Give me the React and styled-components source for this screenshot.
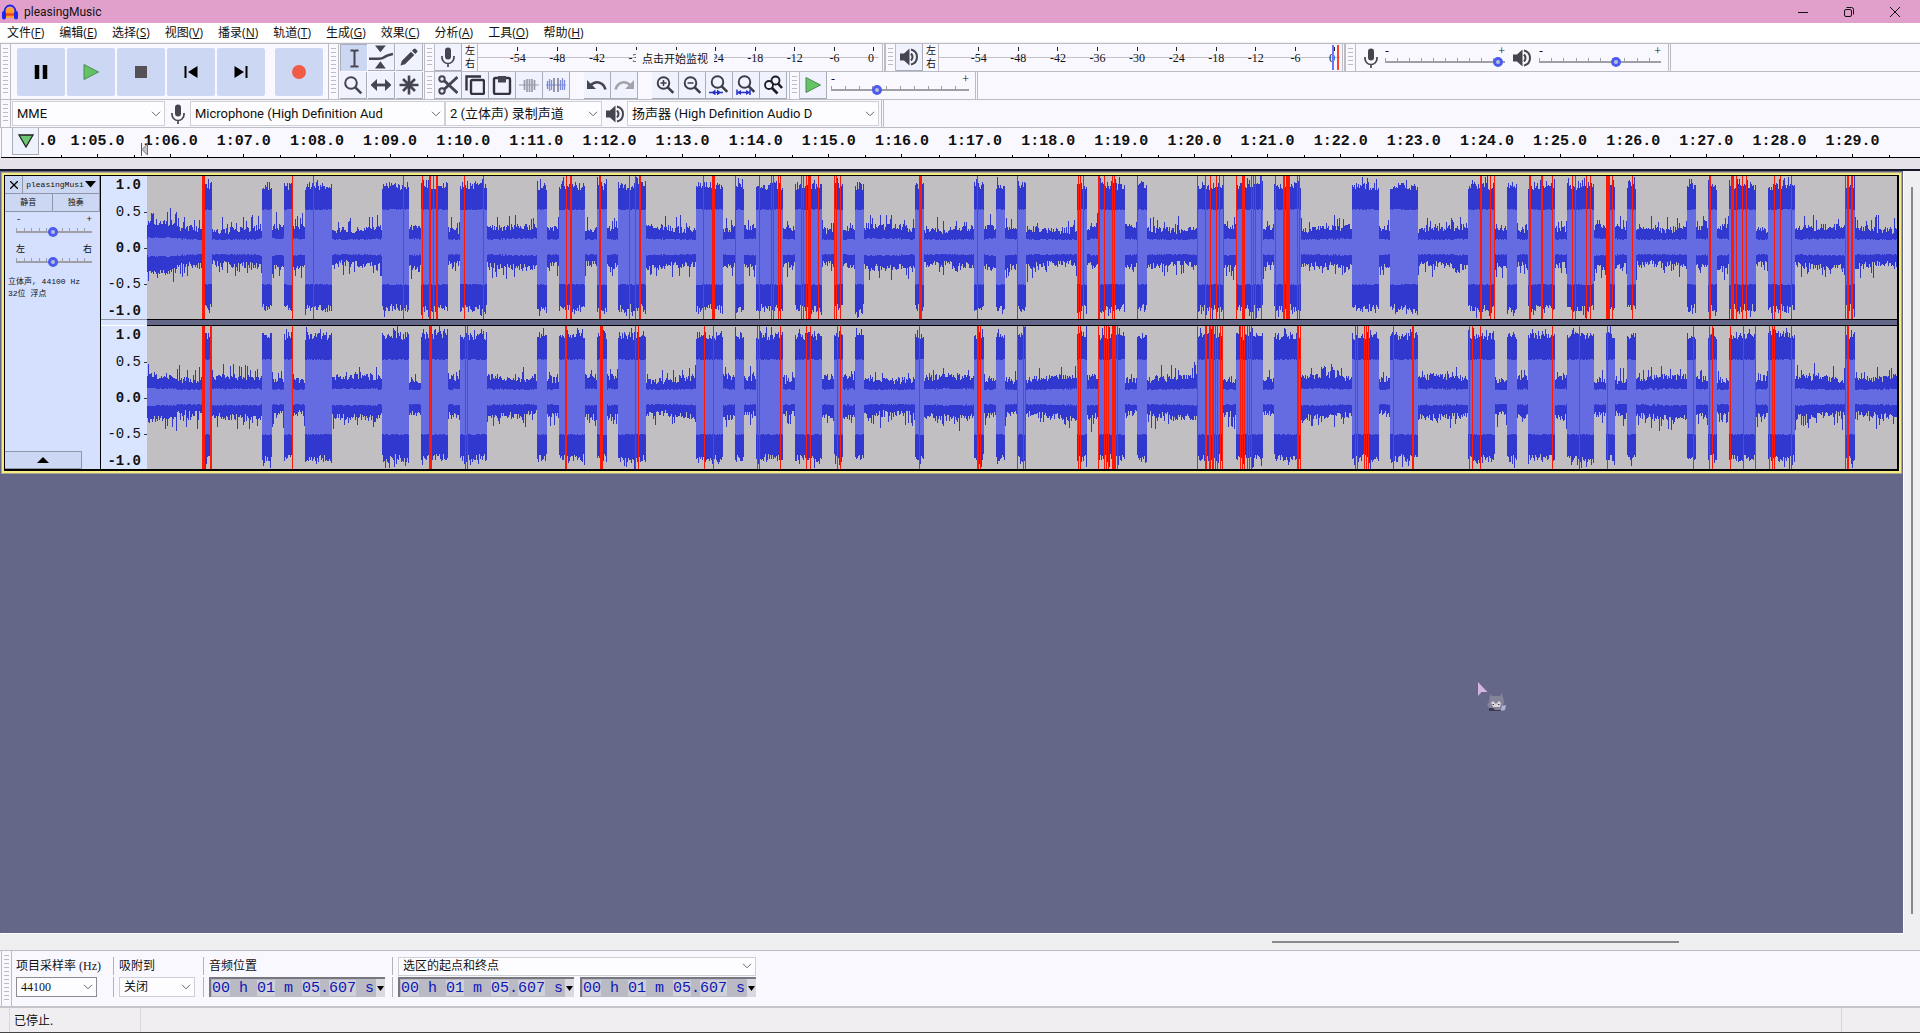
import React from "react";
import styled, { createGlobalStyle, css } from "styled-components";

const ui = '"Open Sans", "Noto Sans CJK SC", sans-serif';
const field = 'Roboto, "Noto Sans CJK SC", sans-serif';
const song = '"Liberation Serif", "Noto Sans CJK SC", serif';
const mono = '"Liberation Mono", "Noto Sans CJK SC", monospace';
const line = "#bdbbc3";
const ink = "#45454f";

const Global = createGlobalStyle`
  *, *::before, *::after { box-sizing: border-box; }
  body { margin: 0; font-family: ${ui}; font-size: 12px; color: #111; }
  button, select, input { font: inherit; color: inherit; margin: 0; padding: 0; border: 0; border-radius: 0; }
  svg { display: block; }
`;

/* ---------- frame ---------- */
const Window = styled.div`
  display: flex;
  flex-direction: column;
  height: 100vh;
  overflow: hidden;
  background: #f9f8ff;
  border-bottom: 1px solid #444;
`;
const TitleBar = styled.header`
  display: flex;
  align-items: center;
  flex: none;
  height: 23px;
  padding: 0 2px;
  background: #e0a0cb;
`;
const Title = styled.h1`
  flex: 1;
  margin: 0;
  padding-left: 6px;
  font: 400 12px/20px ${field};
`;
const CaptionButton = styled.button`
  display: grid;
  place-items: center;
  width: 46px;
  height: 22px;
  background: none;
`;
const MenuBar = styled.nav`
  display: flex;
  flex: none;
  height: 20px;
  padding-left: 7px;
  gap: 15px;
  background: #fff;
  border-bottom: 1px solid #efeff2;
`;
const MenuItem = styled.button`
  background: none;
  line-height: 18px;
  white-space: nowrap;
`;

/* ---------- tool dock ---------- */
const Dock = styled.div`
  flex: none;
  border-top: 1px solid ${line};
`;
const DockTop = styled.div`
  display: flex;
  border-bottom: 1px solid ${line};
`;
const DockRows = styled.div`
  flex: 1;
  display: grid;
  grid-template-rows: 27px 27px;
  row-gap: 1px;
  background: ${line};
`;
const Row = styled.div`
  display: flex;
  background: #f9f8ff;
  height: 27px;
`;
const DeviceRow = styled(Row)`
  height: 28px;
  border-bottom: 1px solid ${line};
`;
const Grip = styled.div`
  flex: none;
  width: 11px;
  margin-right: ${(p) => p.$after || 0}px;
  border: solid ${line};
  border-width: 0 1px;
  background: repeating-linear-gradient(#bdbbc3 0 1px, transparent 1px 4px) 50% 4px / 5px calc(100% - 8px) no-repeat;
`;
const BarEnd = styled.div`
  width: 3px;
  margin-left: ${(p) => p.$before || 0}px;
  border: solid ${line};
  border-width: 0 1px;
`;
const Transport = styled.div`
  display: flex;
  align-items: center;
  gap: 2px;
  padding: 0 5px 0 6px;
`;
const TransportButton = styled.button`
  display: grid;
  place-items: center;
  width: 48px;
  height: 48px;
  margin-left: ${(p) => (p.$apart ? 8 : 0)}px;
  border-radius: 2px;
  background: #ccd8f3;
`;
const ToolGrid = styled.div`
  display: grid;
  grid-template-columns: repeat(3, 27px);
  grid-auto-rows: 27px;
  gap: 1px;
  width: 84px;
`;
const ToolButton = styled.button`
  display: grid;
  place-items: center;
  flex: none;
  width: 27px;
  height: 27px;
  background: #f0f2fd;
  border: solid #a9adba;
  border-width: 0 1px 1px 0;
  ${(p) =>
    p.$down &&
    css`
      background: #ccd8f3;
      border-width: 1px 0 0 1px;
    `}
`;
const Gap = styled.div`
  width: ${(p) => p.$w}px;
`;

/* ---------- meters ---------- */
const LeftRight = styled.div`
  display: grid;
  grid-template-rows: 13px 13px;
  width: 15px;
  padding-left: 3px;
  font: 10px/13px ${song};
`;
const Meter = styled.div`
  position: relative;
  display: flex;
  width: 402px;
  padding: 0 5px 0 20px;
  border-left: 1px solid ${line};
  background: linear-gradient(#c4c2c8, #c4c2c8) 0 13px / 100% 1px no-repeat;
`;
const MeterMark = styled.span`
  flex: 2 1 0;
  text-align: center;
  font: 12px/14px ${song};
  &::before {
    content: "";
    display: block;
    width: 1px;
    height: 4px;
    margin: 3px auto 0;
    background: #222;
  }
  &:last-of-type {
    flex-grow: 1;
    text-align: right;
  }
  &:last-of-type::before {
    margin-right: 0;
  }
`;
const MeterHint = styled.button`
  position: absolute;
  left: 158px;
  top: 6px;
  padding: 0 6px;
  background: #f9f8ff;
  font: 11px/17px ${ui};
  white-space: nowrap;
`;
const ClipBars = styled.div`
  position: absolute;
  right: 0;
  top: 1px;
  width: 8px;
  height: 25px;
  background: linear-gradient(90deg, #6a72ff 0 2px, transparent 2px 5px, #ff4030 5px 7px, transparent 7px);
`;

/* ---------- sliders ---------- */
const SliderBox = styled.label`
  display: grid;
  grid-template-columns: 1fr 1fr;
  align-content: start;
  width: ${(p) => p.$w}px;
  padding-top: 2px;
  font: 12px/10px ${song};
  & > :nth-child(2) {
    text-align: right;
  }
`;
const Range = styled.input`
  grid-column: 1 / 3;
  appearance: none;
  width: 100%;
  height: 12px;
  background:
    linear-gradient(#a09ea6, #a09ea6) 0 5px / 100% 2px no-repeat,
    repeating-linear-gradient(90deg, #a09ea6 0 1px, transparent 1px 10%) 0 2px / 100% 3px no-repeat;
  &::-webkit-slider-thumb {
    appearance: none;
    width: 10px;
    height: 10px;
    border: 3px solid #4c5cf0;
    border-radius: 50%;
    background: #b9bfd8;
  }
`;

/* ---------- drop-downs ---------- */
const Pick = styled.div`
  display: grid;
  grid-template-columns: 1fr 17px;
  align-items: center;
  width: ${(p) => p.$w}px;
  height: ${(p) => p.$h || 25}px;
  border: 1px solid ${(p) => p.$edge || "#cfcfd6"};
  background: #fdfdff;
  & > select {
    grid-area: 1 / 1 / 2 / 3;
    appearance: none;
    height: 100%;
    padding-left: 4px;
    background: none;
    font: ${(p) => p.$font || `13px/20px ${field}`};
    outline: 0;
  }
  & > svg {
    grid-area: 1 / 2;
    justify-self: center;
    pointer-events: none;
  }
`;
const IconSlot = styled.span`
  display: grid;
  place-items: center;
  flex: none;
  width: ${(p) => p.$w}px;
`;
const DeviceBar = styled.div`
  display: flex;
  align-items: center;
  padding-left: 1px;
`;

/* ---------- time ruler ---------- */
const Timeline = styled.div`
  position: relative;
  display: flex;
  flex: none;
  height: 30px;
  border-bottom: 1px solid #000;
  margin-left: 1px;
`;
const PinWell = styled.div`
  width: 37px;
  padding-left: 10px;
  border-left: 1px solid ${line};
`;
const PinButton = styled(ToolButton)`
  border-left-width: 1px;
  background: #eef2fd;
`;
const FirstStamp = styled.div`
  width: 23px;
  font: bold 15px/27px ${mono};
`;
const Stamp = styled.div`
  flex: 73 1 0;
  display: flex;
  flex-direction: column;
  align-items: center;
  padding-top: 1px;
  font: bold 15px/25px ${mono};
  white-space: nowrap;
  background: linear-gradient(#000, #000) 0 100% / 1px 2px no-repeat;
  &::after {
    content: "";
    width: 1px;
    height: 3px;
    background: #000;
  }
`;
const TimelineTail = styled.div`
  flex: 31 1 0;
  background: linear-gradient(#000, #000) 0 100% / 1px 2px no-repeat;
`;
const PlayStart = styled.svg`
  position: absolute;
  left: 140px;
  top: 15px;
`;
const RulerFoot = styled.div`
  flex: none;
  height: 13px;
  background: #e5e3e9;
  border-bottom: 2px solid #17172a;
`;

/* ---------- tracks ---------- */
const Workspace = styled.main`
  flex: 1;
  display: grid;
  grid-template-columns: 1fr 17px;
  grid-template-rows: 1fr 17px;
  min-height: 0;
  background: #efeff2;
`;
const Canvas = styled.section`
  position: relative;
  min-width: 0;
  background: #646787;
  box-shadow: 1px 1px 0 #fff;
`;
const Track = styled.article`
  display: grid;
  grid-template-columns: 95px 47px 1fr;
  margin: 2px 2px 0;
  padding: 1px 2px 2px 1px;
  border: 2px solid #f7ea84;
  outline: 1px solid #a9a78a;
  background: #000;
`;
const Panel = styled.div`
  display: flex;
  flex-direction: column;
  background: #d4e0fe;
`;
const PanelRow = styled.div`
  display: grid;
  grid-template-columns: ${(p) => p.$cols};
`;
const PanelButton = styled.button`
  display: flex;
  align-items: center;
  justify-content: center;
  gap: 1px;
  height: 18px;
  overflow: hidden;
  background: #ccd8f3;
  border: solid #8f96aa;
  border-width: 0 1px 1px 0;
  white-space: nowrap;
  font: 8px/16px ${mono};
`;
const PanelSlider = styled(SliderBox)`
  width: auto;
  margin: ${(p) => p.$top}px 8px 0 11px;
  padding: 0;
  font: 9px/12px ${mono};
`;
const PanelInfo = styled.p`
  flex: 1;
  margin: 8px 0 0 3px;
  white-space: nowrap;
  font: 8px/12px ${mono};
`;
const Collapse = styled(PanelButton)`
  width: 77px;
  border-width: 1px 1px 1px 0;
`;
const VRuler = styled.div`
  display: grid;
  grid-template-rows: 143px 7px 143px;
  margin-left: 1px;
  background: #d9e4ff;
`;
const VScale = styled.div`
  display: grid;
  grid-template-rows: 17fr 38fr 34fr 38fr 16fr;
  align-items: center;
  font: 14px/16px ${mono};
`;
const VMark = styled.span`
  padding-right: 6px;
  text-align: right;
  font-weight: ${(p) => (p.$bold ? 700 : 400)};
  background: ${(p) => (p.$tick ? "linear-gradient(#333, #333) 100% 50% / 3px 1px no-repeat" : "none")};
`;
const VSplit = styled.div`
  border: solid;
  border-width: 1px 0;
  border-color: #8c90a0 transparent #fff;
`;
const Waves = styled.div`
  display: grid;
  grid-template-rows: 143px 5px 143px;
  row-gap: 1px;
  min-width: 0;
  background: #000;
`;
const WaveSplit = styled.div`
  background: #646787;
`;
const WaveSvg = styled.svg`
  width: 100%;
  height: 143px;
  background: #c1bfc2;
`;
const Pointer = styled.svg`
  position: absolute;
  left: 77.6%;
  top: 510px;
`;
const VScroll = styled.div`
  padding: 16px 8px 19px 8px;
`;
const HScroll = styled.div`
  display: grid;
  grid-template-columns: 1272fr 407fr 224fr;
  align-items: center;
`;
const Thumb = styled.div`
  grid-column: 2;
  width: ${(p) => (p.$vertical ? "2px" : "100%")};
  height: ${(p) => (p.$vertical ? "100%" : "2px")};
  background: #8b888c;
`;

/* ---------- selection bar ---------- */
const SelectionBar = styled.footer`
  display: flex;
  flex: none;
  height: 58px;
  padding-left: 1px;
  border-top: 1px solid ${line};
  border-bottom: 2px solid #c6c4cb;
`;
const Group = styled.div`
  display: grid;
  grid-template-rows: 18px 20px;
  row-gap: 2px;
  align-content: start;
  padding-top: 6px;
  width: ${(p) => p.$w}px;
`;
const GroupRow = styled.div`
  display: flex;
  align-items: center;
  gap: 6px;
  padding-left: ${(p) => (p.$first ? 4 : 5)}px;
  border-left: ${(p) => (p.$first ? 0 : 1)}px solid #b4b2ba;
  font: 12px/18px ${song};
  white-space: nowrap;
`;
const TimeBox = styled.div`
  display: flex;
  width: 176px;
  height: 20px;
  border: solid #77777f;
  border-width: 2px 0 0 2px;
  background: #b9bac4;
`;
const cell = (from, n) =>
  `linear-gradient(#cfd0d8, #cfd0d8) calc(${from}ch + 1px) 1px / ${n}ch 16px no-repeat`;
const TimeInput = styled.input`
  flex: 1;
  min-width: 0;
  padding: 1px 0 0 1px;
  font: 15px/17px ${mono};
  color: #1016b4;
  background: ${[cell(0, 2), cell(5, 2), cell(10, 2), cell(13, 3)].join(", ")};
  outline: 0;
`;
const TimeMenu = styled.button`
  display: grid;
  place-items: center;
  width: 9px;
  background: #d9d9df;
`;
const StatusBar = styled.div`
  display: flex;
  flex: none;
  height: 24px;
  padding-left: 9px;
  background: #f0eef1;
`;
const StatusCell = styled.div`
  width: ${(p) => (p.$w ? p.$w + "px" : "auto")};
  flex: ${(p) => (p.$grow ? 1 : "none")};
  padding-left: 4px;
  border-left: 1px solid #d9d7dc;
  font: 12px/25px ${ui};
`;

/* ---------- icons ---------- */
const I = ({ s = 20, children, ...r }) => (
  <svg width={s} height={s} viewBox="0 0 20 20" fill="none" stroke={ink} strokeWidth="2" aria-hidden="true" {...r}>
    {children}
  </svg>
);
const Mic = () => (
  <I>
    <rect x="7" y="0.5" width="6" height="12" rx="3" fill={ink} stroke="none" />
    <path d="M4 9v1.5a6 6 0 0 0 12 0V9M10 16v4" strokeWidth="1.7" />
  </I>
);
const Speaker = () => (
  <I>
    <path d="M1 6.500h4l5.500-5v17l-5.500-5H1z" fill={ink} stroke="none" />
    <path d="M12 6.500q3 3.500 0 7M12 2.500c8 2 8 13 0 15" />
  </I>
);
const Chevron = () => (
  <svg width="10" height="6" viewBox="0 0 10 6" fill="none" stroke="#666" aria-hidden="true">
    <path d="M1 .8l4 4 4-4" />
  </svg>
);
const Lens = ({ children, y = 8 }) => (
  <I stroke="#3c3c46">
    <circle cx="8.500" cy={y} r="5.800" strokeWidth="1.900" />
    <path d={`M12.800 ${y + 4.3}l5.500 5.500`} strokeWidth="2.600" />
    {children}
  </I>
);
const Logo = () => (
  <svg width="16" height="16" viewBox="0 0 16 16" aria-hidden="true">
    <path d="M3 9a5 5.500 0 0 1 10 0v5H3z" fill="#ffa02c" />
    <path d="M3.500 10.500h9" stroke="#f0441c" strokeWidth="2.500" fill="none" />
    <path d="M2.500 10V7.500a5.500 6 0 0 1 11 0V10" fill="none" stroke="#1d24d8" strokeWidth="1.800" />
    <rect x="0" y="7" width="4" height="8.500" rx="2" fill="#1c28f0" />
    <rect x="12" y="7" width="4" height="8.500" rx="2" fill="#1c28f0" />
  </svg>
);

const transport = [
  ["暂停", <I key="i"><path d="M6 3v14M14 3v14" stroke="#000" strokeWidth="4.500" /></I>],
  ["播放", <I key="i"><path d="M3 2.500L17.500 10 3 17.500z" fill="#62c462" stroke="#55855a" strokeWidth="1" /></I>],
  ["停止", <I key="i"><path d="M4 4h12v12H4z" fill="#555157" stroke="none" /></I>],
  ["跳至开头", <I key="i"><path d="M4.500 4v12" stroke="#000" /><path d="M16.500 4v12L7 10z" fill="#000" stroke="none" /></I>],
  ["跳至结尾", <I key="i"><path d="M15.500 4v12" stroke="#000" /><path d="M3.500 4v12L13 10z" fill="#000" stroke="none" /></I>],
  ["录制", <I key="i"><circle cx="10" cy="10" r="7" fill="#f05a46" stroke="none" /></I>],
];
const tools = [
  ["选择工具", <I key="i"><path d="M6.500 2.500h3l1 1 1-1h3M6.500 18.500h3l1-1 1 1h3M10.500 3v15" strokeWidth="2" /></I>],
  ["包络工具", <I key="i" s={24}><path d="M0 11.500h8q3 0 5-1.500t7-2.500" strokeWidth="2.200" /><path d="M5 0.500h9l-4.500 5.500zM5 19.500h9L9.500 13.500z" fill={ink} stroke="none" /></I>],
  ["绘制工具", <I key="i"><path d="M1.500 18.500l1.200-4.500L12 4.700l3.300 3.300L6 17.300zM13 3.700l1.700-1.700q1-1 2 0l1.300 1.300q1 1 0 2L16.300 7z" fill={ink} stroke="none" /></I>],
  ["缩放工具", <I key="i"><circle cx="8" cy="8" r="5.800" /><path d="M12.300 12.300l6 6" strokeWidth="2.600" /></I>],
  ["时间移动工具", <I key="i"><path d="M3 10h14" strokeWidth="2.800" /><path d="M6 4v12L-.5 10zM14 4v12l6.500-6z" fill={ink} stroke="none" /></I>],
  ["多功能工具", <I key="i"><path d="M10 .5v19M.5 10h19M4 4l12 12M16 4L4 16" strokeWidth="2.600" /></I>],
];
const edit = [
  ["剪切", <I key="i"><circle cx="4" cy="4" r="2.700" /><circle cx="4" cy="16" r="2.700" /><path d="M6 5.500L19.500 18M6 14.500L19.500 2" strokeWidth="3" /></I>],
  ["复制", <I key="i" stroke="#34343e"><rect x="6" y="5" width="13" height="14" rx="1.500" strokeWidth="2.400" /><path d="M1.500 15.500V1.500H16" strokeWidth="2.400" /></I>],
  ["粘贴", <I key="i" stroke="#34343e"><rect x="2" y="3" width="16" height="16" rx="1.500" strokeWidth="2.400" /><path d="M6 1h8v6.500H6z" fill={ink} stroke="none" /></I>],
  ["修剪", <I key="i" stroke="#9a9aac"><path d="M0 10h20" strokeWidth="1" /><path d="M5.500 5v10M8 4v13M10.500 4v13M13 4v13M15.500 5v10" strokeWidth="1.700" /></I>],
  ["静音", <I key="i" stroke="#7c8cdc"><path d="M0 10h20" strokeWidth="1" /><path d="M1.500 6v8M3.500 4v12M5.500 5v10M14.500 5v10M16.500 3v12M18.500 5v10" strokeWidth="1.300" /><path d="M8 3v14M12 3v14" stroke="#77788c" strokeWidth="1.500" /></I>],
  null,
  ["撤销", <I key="i"><path d="M3.500 10.500C8 5.500 16 6 18.500 14.500" strokeWidth="2.600" /><path d="M0 5v9h9z" fill={ink} stroke="none" /></I>],
  ["重做", <I key="i" stroke="#a2a2a8"><path d="M16.500 10.500C12 5.500 4 6 1.500 14.500" strokeWidth="2.600" /><path d="M20 5v9h-9z" fill="#a2a2a8" stroke="none" /></I>],
  null,
  ["放大", <Lens key="i"><path d="M8.500 5v6M5.500 8h6" strokeWidth="1.500" /></Lens>],
  ["缩小", <Lens key="i"><path d="M5.500 8h6" strokeWidth="1.500" /></Lens>],
  ["适应选区", <Lens key="i" y={7}><path d="M0 17.500h14" stroke="#2630c8" strokeWidth="1.500" /><path d="M6.500 14.500v6l-4-3zM8 14.500v6l4-3z" fill="#2630c8" stroke="none" /></Lens>],
  ["适应项目", <Lens key="i" y={7}><path d="M1 14.500v6M14 14.500v6M1 17.500h13" stroke="#2630c8" strokeWidth="1.500" /><path d="M5 15v5l-4-2.500zM10 15v5l4-2.500z" fill="#2630c8" stroke="none" /></Lens>],
  ["缩放切换", <I key="i" stroke="#1c1c22" strokeWidth="1.800"><circle cx="12.500" cy="5.500" r="4" /><path d="M15 8.500l4 4.500" strokeWidth="2.600" /><circle cx="6" cy="10" r="4" /><path d="M9 13l5.500 5.500" strokeWidth="2.600" /></I>],
];

/* ---------- data ---------- */
const menus = [["文件", "F"], ["编辑", "E"], ["选择", "S"], ["视图", "V"], ["播录", "N"], ["轨道", "T"], ["生成", "G"], ["效果", "C"], ["分析", "A"], ["工具", "O"], ["帮助", "H"]];
const levels = [-54, -48, -42, -36, -30, -24, -18, -12, -6, 0];
const stamps = Array.from({ length: 25 }, (_, i) => `1:${String(5 + i).padStart(2, "0")}.0`);

/* loud passages, as [start, end] columns of the visible clip */
const bursts = [
  [58, 65], [115, 125], [137, 146], [158, 185], [235, 262], [274, 301], [313, 340], [390, 400], [412, 438],
  [450, 460], [471, 499], [549, 576], [588, 597], [609, 636], [648, 675], [687, 696], [708, 717], [768, 777],
  [827, 837], [849, 858], [870, 879], [930, 940], [951, 978], [990, 1000], [1050, 1076], [1089, 1116],
  [1127, 1154], [1205, 1232], [1243, 1271], [1321, 1348], [1360, 1370], [1381, 1408], [1420, 1447],
  [1459, 1468], [1480, 1489], [1540, 1549], [1561, 1570], [1582, 1609], [1621, 1648], [1698, 1708],
];

/* clipped samples, as [column, width] */
const clipsA = [
  [55, 3], [145], [166], [256], [275], [282, 2], [286], [289, 2], [317], [336], [419], [423, 2], [452, 2], [482],
  [488], [492, 2], [556], [565, 3], [588], [612], [624], [626], [631], [633], [654], [656], [659], [661, 3], [671],
  [687], [689], [693], [772, 3], [830], [870], [931], [933], [936], [951, 2], [957], [965], [967], [990], [1050],
  [1058], [1063], [1069], [1072], [1076], [1089], [1095, 3], [1104], [1106], [1108], [1114], [1128], [1136, 2],
  [1139, 4], [1150], [1152], [1333, 2], [1343], [1347], [1382, 2], [1394, 2], [1405], [1425], [1428], [1439],
  [1443], [1459, 4], [1465], [1485], [1562, 2], [1584, 3], [1589], [1595], [1599], [1627], [1633], [1644], [1698],
  [1700, 2], [1704, 2],
];
const clipsB = [
  [55, 3], [63, 2], [145], [282, 3], [318], [320], [418, 2], [453, 3], [488], [491], [557], [566], [610], [612],
  [633], [659], [663], [690], [693], [772], [830, 2], [833], [870], [876], [878], [931], [933], [951], [957], [959],
  [961], [965, 4], [970], [1050], [1058, 2], [1062, 2], [1065, 2], [1068], [1070], [1073], [1075], [1093], [1095],
  [1097], [1100], [1102], [1104], [1150, 2], [1153], [1208], [1210], [1217], [1219], [1221], [1246], [1265, 2],
  [1322], [1325], [1333], [1405], [1432], [1460], [1546], [1562], [1565], [1583], [1596], [1608], [1622], [1625],
  [1627], [1644], [1698], [1700, 2],
];

const WIDTH = 1750;
const MID = 71;

function waveform(seed) {
  let n = seed;
  const rnd = () => {
    n = (n * 1664525 + 1013904223) % 4294967296;
    return n / 4294967296;
  };
  const spike = (odds, size) => (rnd() < odds ? rnd() * size : 0);
  let peak = "";
  let rms = "";
  for (let x = 0; x < WIDTH; x++) {
    const loud = bursts.some(([a, b]) => x >= a && x < b);
    let up, down, core;
    if (loud) {
      up = 57 + rnd() * 8 + spike(0.25, 8);
      down = 57 + rnd() * 8 + spike(0.25, 8);
      core = 37 + rnd();
    } else {
      const swell = 2 * Math.sin(x / 19 + seed) + (x < 30 ? 4 : 0);
      up = 15 + swell + rnd() * 7 + spike(0.2, 13);
      down = 15 + swell + rnd() * 7 + spike(0.2, 13);
      core = 7 + rnd() * 1.5 + swell / 4;
    }
    up = Math.round(up);
    down = Math.round(down);
    core = Math.round(core);
    peak += `M${x} ${MID - up}h1v${up + down}h-1z`;
    rms += `M${x} ${MID - core}h1v${core * 2}h-1z`;
  }
  return { peak, rms };
}
const channels = [
  { ...waveform(7), clips: clipsA },
  { ...waveform(91), clips: clipsB },
];

/* ---------- parts ---------- */
const Wave = ({ peak, rms, clips, label }) => (
  <WaveSvg viewBox={`0 0 ${WIDTH} 143`} preserveAspectRatio="none" shapeRendering="crispEdges" role="img" aria-label={label}>
    <path d={peak} fill="#3038d0" />
    <path d={rms} fill="#656ce2" />
    <path d={clips.map(([x, w = 1]) => `M${x} 0h${w}v143h-${w}z`).join("")} fill="#ff1a08" />
  </WaveSvg>
);
const Slider = ({ as: Box = SliderBox, lo = "-", hi = "+", name, value, ...rest }) => (
  <Box {...rest}>
    <span>{lo}</span>
    <span>{hi}</span>
    <Range type="range" min="0" max="100" defaultValue={value} aria-label={name} />
  </Box>
);
const Dropdown = ({ name, value, id, ...rest }) => (
  <Pick {...rest}>
    <select aria-label={name} id={id} defaultValue={value}>
      <option>{value}</option>
    </select>
    <Chevron />
  </Pick>
);
const LevelMeter = ({ hint, clip }) => (
  <>
    <LeftRight>
      <span>左</span>
      <span>右</span>
    </LeftRight>
    <Meter>
      {levels.map((l) => (
        <MeterMark key={l}>{hint && l === -30 ? null : l}</MeterMark>
      ))}
      {hint && <MeterHint>{hint}</MeterHint>}
      {clip && <ClipBars />}
    </Meter>
  </>
);
const Scale = () => (
  <VScale>
    <VMark $bold>1.0</VMark>
    <VMark $tick>0.5</VMark>
    <VMark $bold $tick>0.0</VMark>
    <VMark $tick>-0.5</VMark>
    <VMark $bold>-1.0</VMark>
  </VScale>
);
const TimeField = ({ name, id }) => (
  <TimeBox>
    <TimeInput id={id} aria-label={name} defaultValue="00 h 01 m 05.607 s" />
    <TimeMenu aria-label={`${name}格式`}>
      <svg width="7" height="5" viewBox="0 0 7 5"><path d="M0 0h7L3.500 5z" /></svg>
    </TimeMenu>
  </TimeBox>
);

export default function App() {
  return (
    <Window>
      <Global />
      <TitleBar>
        <Logo />
        <Title>pleasingMusic</Title>
        <CaptionButton aria-label="最小化">
          <svg width="10" height="10" stroke="#111"><path d="M0 5.500h10" /></svg>
        </CaptionButton>
        <CaptionButton aria-label="还原">
          <svg width="10" height="10" fill="none" stroke="#111"><rect x=".5" y="2.500" width="7" height="7" rx="1.500" /><path d="M2.500 .5h5a2 2 0 0 1 2 2v5" /></svg>
        </CaptionButton>
        <CaptionButton aria-label="关闭">
          <svg width="10" height="10" stroke="#111"><path d="M0 0l10 10M10 0L0 10" /></svg>
        </CaptionButton>
      </TitleBar>
      <MenuBar>
        {menus.map(([t, k]) => (
          <MenuItem key={k}>
            {t}(<u>{k}</u>)
          </MenuItem>
        ))}
      </MenuBar>

      <Dock>
        <DockTop>
          <Grip />
          <Transport>
            {transport.map(([name, icon], i) => (
              <TransportButton key={name} aria-label={name} $apart={i === 5}>{icon}</TransportButton>
            ))}
          </Transport>
          <Grip $after={1} />
          <ToolGrid>
            {tools.map(([name, icon], i) => (
              <ToolButton key={name} aria-label={name} $down={i === 0}>{icon}</ToolButton>
            ))}
          </ToolGrid>
          <DockRows>
            <Row>
              <Grip />
              <ToolButton aria-label="录音电平"><Mic /></ToolButton>
              <LevelMeter hint="点击开始监视" />
              <BarEnd $before={3} />
              <Grip />
              <ToolButton aria-label="播放电平"><Speaker /></ToolButton>
              <LevelMeter clip />
              <BarEnd $before={2} />
              <Grip />
              <IconSlot $w={29}><Mic /></IconSlot>
              <Slider $w={120} name="录音音量" value={98} />
              <IconSlot $w={34}><Speaker /></IconSlot>
              <Slider $w={122} name="播放音量" value={64} />
              <BarEnd $before={7} />
            </Row>
            <Row>
              <Grip />
              {edit.map((e, i) =>
                e ? (
                  <ToolButton key={e[0]} aria-label={e[0]}>{e[1]}</ToolButton>
                ) : (
                  <Gap key={i} $w={14} />
                )
              )}
              <Gap $w={2} />
              <Grip />
              <ToolButton aria-label="以指定速度播放">
                <I><path d="M3 2.500L17.500 10 3 17.500z" fill="#62c462" stroke="#55855a" strokeWidth="1" /></I>
              </ToolButton>
              <Gap $w={4} />
              <Slider $w={138} name="播放速度" value={32} />
              <BarEnd $before={6} />
            </Row>
          </DockRows>
        </DockTop>
        <DeviceRow>
          <Grip />
          <DeviceBar>
            <Dropdown $w={153} name="音频主机" value="MME" />
            <IconSlot $w={25}><Mic /></IconSlot>
            <Dropdown $w={255} name="录音设备" value="Microphone (High Definition Aud" />
            <Dropdown $w={157} name="录音声道" value="2 (立体声) 录制声道" />
            <IconSlot $w={25}><Speaker /></IconSlot>
            <Dropdown $w={252} name="播放设备" value="扬声器 (High Definition Audio D" />
          </DeviceBar>
          <BarEnd $before={2} />
        </DeviceRow>
      </Dock>

      <Timeline>
        <PinWell>
          <PinButton aria-label="固定播放头">
            <svg width="16" height="14" viewBox="0 0 16 14"><path d="M1 1h14L8 13z" fill="#6cc870" stroke="#222" strokeWidth="1.300" /></svg>
          </PinButton>
        </PinWell>
        <FirstStamp>.0</FirstStamp>
        {stamps.map((s) => (
          <Stamp key={s}>{s}</Stamp>
        ))}
        <TimelineTail />
        <PlayStart width="7" height="13"><path d="M.5 0v13" stroke="#555" /><path d="M6.500 1v11L1 6.500z" fill="#c4c4c8" stroke="#777" /></PlayStart>
      </Timeline>
      <RulerFoot />

      <Workspace>
        <Canvas>
          <Track>
            <Panel>
              <PanelRow $cols="18px 1fr">
                <PanelButton aria-label="关闭轨道">
                  <svg width="8" height="8" stroke="#000" strokeWidth="1.300"><path d="M0 0l8 8M8 0L0 8" /></svg>
                </PanelButton>
                <PanelButton>
                  pleasingMusi
                  <svg width="11" height="7"><path d="M0 0h11L5.500 6.500z" /></svg>
                </PanelButton>
              </PanelRow>
              <PanelRow $cols="1fr 1fr">
                <PanelButton>静音</PanelButton>
                <PanelButton>独奏</PanelButton>
              </PanelRow>
              <Slider as={PanelSlider} $top={2} name="增益" value={48} />
              <Slider as={PanelSlider} $top={6} lo="左" hi="右" name="声像" value={48} />
              <PanelInfo>
                立体声, 44100 Hz
                <br />
                32位 浮点
              </PanelInfo>
              <Collapse aria-label="折叠">
                <svg width="12" height="6"><path d="M0 6h12L6 0z" /></svg>
              </Collapse>
            </Panel>
            <VRuler>
              <Scale />
              <VSplit />
              <Scale />
            </VRuler>
            <Waves>
              <Wave {...channels[0]} label="左声道波形" />
              <WaveSplit />
              <Wave {...channels[1]} label="右声道波形" />
            </Waves>
          </Track>
          <Pointer width="30" height="32" viewBox="0 0 30 32" aria-hidden="true">
            <path d="M1 1v14l3.500-4h6z" fill="#d3b4e2" />
            <path d="M13 13l2 2h8l2-3 2 8-1 6 2 1-3 3H13l-1-3-2-4 2-2z" fill="#85839a" />
            <path d="M14 22l2-2 3 3 3-3 2 2-1 4h-7z" fill="#ddd3da" />
            <path d="M12 27h4l2 2h5l3 1H12z" fill="#383a50" />
            <path d="M15.500 23.500h1.500M21 23.500h1.500" stroke="#383a50" />
            <path d="M25 25l4-1-1 5-4 1z" fill="#aab4d4" />
          </Pointer>
        </Canvas>
        <VScroll><Thumb $vertical /></VScroll>
        <HScroll><Thumb /></HScroll>
      </Workspace>

      <SelectionBar>
        <Grip />
        <Group $w={101}>
          <GroupRow as="label" htmlFor="rate" $first>项目采样率 (Hz)</GroupRow>
          <GroupRow $first>
            <Dropdown $w={81} $h={20} $edge="#8c8c92" $font={`12px/16px ${song}`} id="rate" value="44100" />
          </GroupRow>
        </Group>
        <Group $w={90}>
          <GroupRow as="label" htmlFor="snap">吸附到</GroupRow>
          <GroupRow>
            <Dropdown $w={76} $h={20} $font={`12px/16px ${song}`} id="snap" value="关闭" />
          </GroupRow>
        </Group>
        <Group $w={189}>
          <GroupRow as="label" htmlFor="pos">音频位置</GroupRow>
          <GroupRow>
            <TimeField id="pos" name="音频位置" />
          </GroupRow>
        </Group>
        <Group $w={370}>
          <GroupRow>
            <Dropdown $w={358} $h={19} $font={`12px/16px ${song}`} name="选区显示方式" value="选区的起点和终点" />
          </GroupRow>
          <GroupRow>
            <TimeField name="选区起点" />
            <TimeField name="选区终点" />
          </GroupRow>
        </Group>
      </SelectionBar>
      <StatusBar>
        <StatusCell $w={131}>已停止.</StatusCell>
        <StatusCell $grow />
        <StatusCell $w={79} />
      </StatusBar>
    </Window>
  );
}
